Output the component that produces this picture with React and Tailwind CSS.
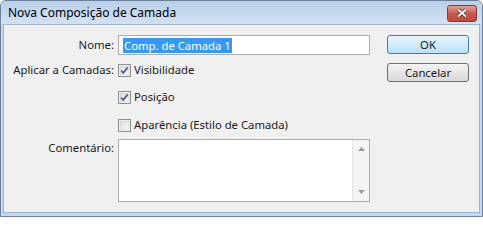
import React from "react";

function Check({ checked }) {
    return (
        <svg width="13" height="13" viewBox="0 0 13 13" className="shrink-0">
            <defs>
                <linearGradient id="cbg" x1="0" y1="0" x2="1" y2="1">
                    <stop offset="0" stopColor="#dcdcdc" />
                    <stop offset="1" stopColor="#f8f8f8" />
                </linearGradient>
            </defs>
            <rect x="0.5" y="0.5" width="12" height="12" fill="#fff" stroke="#8e8f8f" />
            <rect x="2" y="2" width="9" height="9" fill="url(#cbg)" stroke="#c4c4c4" strokeWidth="0.6" />
            {checked && (
                <path d="M3.2 6.6 L5.3 8.9 L9.8 3.4" fill="none" stroke="#4a5f97" strokeWidth="1.7" />
            )}
        </svg>
    );
}

function Row({ label, children, className = "" }) {
    return (
        <div className={`flex items-center h-[20px] ${className}`}>
            <div className="w-[114px] pr-[4px] text-right">{label}</div>
            <div className="flex items-center gap-[3px]">{children}</div>
        </div>
    );
}

export default function App() {
    return (
        <div
            className="w-[483px] h-[217px] flex flex-col bg-[#c3d7ee] border border-[#6f819a] rounded-t-[6px] text-[11.3px] text-[#1a1a1a] overflow-hidden"
            style={{ fontFamily: '"Noto Sans", "Open Sans", sans-serif' }}
        >
            <div className="h-[23px] shrink-0 flex items-center justify-between pl-[7px] pr-[5px] bg-gradient-to-b from-[#b9d0ea] to-[#d2e1f2]">
                <span className="text-[12px] text-black">Nova Composição de Camada</span>
                <div className="w-[30px] h-[17px] mt-[1px] rounded-[3px] border border-[#7c3f3f] bg-gradient-to-b from-[#e6a398] via-[#c9584a] to-[#c5483a] flex items-center justify-center">
                    <svg width="12" height="10" viewBox="0 0 12 10">
                        <path d="M2 1.5 L10 8.5 M10 1.5 L2 8.5" stroke="#3d2a2a" strokeWidth="3.2" />
                        <path d="M2 1.5 L10 8.5 M10 1.5 L2 8.5" stroke="#fff" strokeWidth="2" />
                    </svg>
                </div>
            </div>
            <div className="flex-1 ml-[2px] mr-[2px] mb-[3px] bg-[#f0f0f0] border border-[#9fb5cf] flex pt-[10px]">
                <div className="flex flex-col">
                    <Row label="Nome:">
                        <div className="w-[252px] h-[20px] border border-[#abadb3] bg-white flex items-center pl-[4px]">
                            <span className="bg-[#3399ff] text-white leading-[15px] px-[1px]">Comp. de Camada 1</span>
                        </div>
                    </Row>
                    <Row label="Aplicar a Camadas:" className="mt-[5px]">
                        <Check checked />
                        <span>Visibilidade</span>
                    </Row>
                    <Row label="" className="mt-[7px]">
                        <Check checked />
                        <span>Posição</span>
                    </Row>
                    <Row label="" className="mt-[8px]">
                        <Check />
                        <span>Aparência (Estilo de Camada)</span>
                    </Row>
                    <div className="flex mt-[4px]">
                        <div className="w-[114px] pr-[4px] text-right pt-[1px]">Comentário:</div>
                        <div className="w-[252px] h-[63px] border border-[#abadb3] bg-white flex justify-end">
                            <div className="w-[17px] h-full bg-[#f4f4f4] border-l border-[#e6e6e6] flex flex-col items-center justify-between py-[7px]">
                                <svg width="7" height="4" viewBox="0 0 7 4">
                                    <path d="M0 4 L3.5 0 L7 4 Z" fill="#9a9a9a" />
                                </svg>
                                <svg width="7" height="4" viewBox="0 0 7 4">
                                    <path d="M0 0 L3.5 4 L7 0 Z" fill="#9a9a9a" />
                                </svg>
                            </div>
                        </div>
                    </div>
                </div>
                <div className="flex flex-col ml-[17px]">
                    <button className="w-[82px] h-[19px] rounded-[3px] border border-[#3c7fb1] bg-gradient-to-b from-[#eaf6fd] to-[#b8e0f8] leading-none">
                        OK
                    </button>
                    <button className="w-[82px] h-[19px] mt-[9px] rounded-[3px] border border-[#707070] bg-gradient-to-b from-[#f4f4f4] to-[#d8d8d8] leading-none">
                        Cancelar
                    </button>
                </div>
            </div>
        </div>
    );
}
